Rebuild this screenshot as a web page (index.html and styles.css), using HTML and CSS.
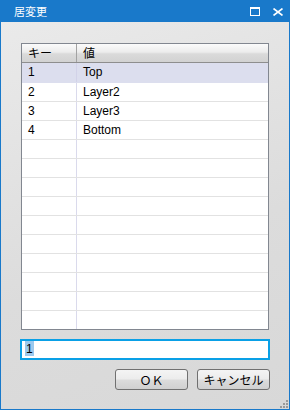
FILE: index.html
```html
<!DOCTYPE html>
<html lang="ja">
<head>
    <meta charset="UTF-8">
    <title>居変更</title>
    <link rel="stylesheet" href="styles.css">
</head>
<body>
    <div class="window">
        <div class="titlebar">
            <span class="title">居変更</span>
            <div class="controls">
                <!-- maximize -->
                <svg width="10" height="9" viewBox="0 0 10 9">
                    <rect x="0.5" y="0.5" width="9" height="8" fill="none" stroke="#fff"/>
                    <rect x="0" y="0" width="10" height="2" fill="#fff"/>
                </svg>
                <!-- close -->
                <svg width="10" height="8" viewBox="0 0 10 8">
                    <path d="M0.5 0.5 L9.5 7.5 M9.5 0.5 L0.5 7.5" stroke="#fff" stroke-width="1.6"/>
                </svg>
            </div>
        </div>

        <div class="content">
            <div class="grid">
                <div class="grid-head">
                    <div class="cell key">キー</div>
                    <div class="cell val">値</div>
                </div>
                <div class="grid-rows">
                    <div class="row sel"><div class="cell key">1</div><div class="cell val">Top</div></div>
                    <div class="row"><div class="cell key">2</div><div class="cell val">Layer2</div></div>
                    <div class="row"><div class="cell key">3</div><div class="cell val">Layer3</div></div>
                    <div class="row"><div class="cell key">4</div><div class="cell val">Bottom</div></div>
                    <div class="row"><div class="cell key"></div><div class="cell val"></div></div>
                    <div class="row"><div class="cell key"></div><div class="cell val"></div></div>
                    <div class="row"><div class="cell key"></div><div class="cell val"></div></div>
                    <div class="row"><div class="cell key"></div><div class="cell val"></div></div>
                    <div class="row"><div class="cell key"></div><div class="cell val"></div></div>
                    <div class="row"><div class="cell key"></div><div class="cell val"></div></div>
                    <div class="row"><div class="cell key"></div><div class="cell val"></div></div>
                    <div class="row"><div class="cell key"></div><div class="cell val"></div></div>
                    <div class="row"><div class="cell key"></div><div class="cell val"></div></div>
                    <div class="row"><div class="cell key"></div><div class="cell val"></div></div>
                </div>
            </div>

            <div class="textbox"><span class="selected">1</span></div>

            <div class="buttons">
                <button>ＯＫ</button>
                <button>キャンセル</button>
            </div>
        </div>

        <!-- resize grip -->
        <svg class="grip" width="8" height="8" viewBox="0 0 8 8">
            <rect x="6" y="0" width="2" height="2" fill="#9a9a9a"/>
            <rect x="3" y="3" width="2" height="2" fill="#9a9a9a"/>
            <rect x="6" y="3" width="2" height="2" fill="#9a9a9a"/>
            <rect x="0" y="6" width="2" height="2" fill="#9a9a9a"/>
            <rect x="3" y="6" width="2" height="2" fill="#9a9a9a"/>
            <rect x="6" y="6" width="2" height="2" fill="#9a9a9a"/>
        </svg>
    </div>
</body>
</html>
```

FILE: styles.css
```css
body {
    margin: 0;
    padding: 0;
    font-family: "Liberation Sans", "Noto Sans CJK JP", sans-serif;
    font-size: 12px;
    color: #000;
}
.window {
    position: relative;
    width: 290px;
    height: 410px;
    box-sizing: border-box;
    border: 1px solid #1979ca;
    border-top: none;
    background: linear-gradient(160deg, #ebebeb, #dcdcdc 60%, #d8d8d8);
    display: flex;
    flex-direction: column;
}
.titlebar {
    height: 22px;
    margin: 0 -1px;
    background: #1979ca;
    display: flex;
    align-items: center;
    justify-content: space-between;
    padding: 0 7px 0 14px;
}
.title {
    color: #fff;
    font-family: "Noto Sans CJK JP", sans-serif;
    font-size: 11px;
    line-height: 22px;
}
.controls {
    display: flex;
    align-items: center;
    gap: 13px;
    padding-top: 1px;
}
.controls svg {
    display: block;
}
.content {
    flex: 1;
    padding: 21px 20px 0 20px;
    display: flex;
    flex-direction: column;
}
.grid {
    height: 287px;
    box-sizing: border-box;
    border: 1px solid #828790;
    background: #fff;
    display: flex;
    flex-direction: column;
}
.grid-head {
    display: flex;
    height: 18px;
    border-bottom: 1px solid #8e8e8e;
    background: linear-gradient(#fbfbfb, #ececec 45%, #dadada 55%, #d2d2d2);
}
.grid-head .cell {
    line-height: 18px;
    font-family: "Noto Sans CJK JP", sans-serif;
}
.grid-head .key {
    border-right: 1px solid #a2a2a2;
}
.cell {
    padding-left: 6px;
    box-sizing: border-box;
    white-space: nowrap;
}
.key {
    width: 55px;
    border-right: 1px solid #dadaec;
}
.val {
    flex: 1;
}
.grid-rows {
    flex: 1;
    overflow: hidden;
}
.row {
    display: flex;
    height: 19px;
    box-sizing: border-box;
    border-bottom: 1px solid #e2e2e2;
    line-height: 18px;
}
.row.sel {
    height: 20px;
    line-height: 19px;
    background: #dcdeee;
    border-bottom-color: #dcdeee;
}
.row.sel .key {
    border-right-color: #d2d2e8;
}
.textbox {
    margin: 9px -1px 0 -1px;
    height: 21px;
    box-sizing: border-box;
    border: 2px solid #0aa0e6;
    background: #fff;
    padding-left: 3px;
    line-height: 17px;
}
.selected {
    background: #9cc9ee;
    padding: 1px 1px 0 1px;
}
.buttons {
    display: flex;
    justify-content: flex-end;
    gap: 9px;
    margin: 9px -1px 0 0;
}
button {
    width: 73px;
    height: 21px;
    padding: 0;
    border: 1px solid #707070;
    border-radius: 3px;
    background: linear-gradient(#f4f4f4, #ececec 48%, #dcdcdc 52%, #d0d0d0);
    font-family: "Noto Sans CJK JP", sans-serif;
    font-size: 12px;
    line-height: 18px;
    color: #000;
}
.grip {
    position: absolute;
    right: 1px;
    bottom: 1px;
}
```
